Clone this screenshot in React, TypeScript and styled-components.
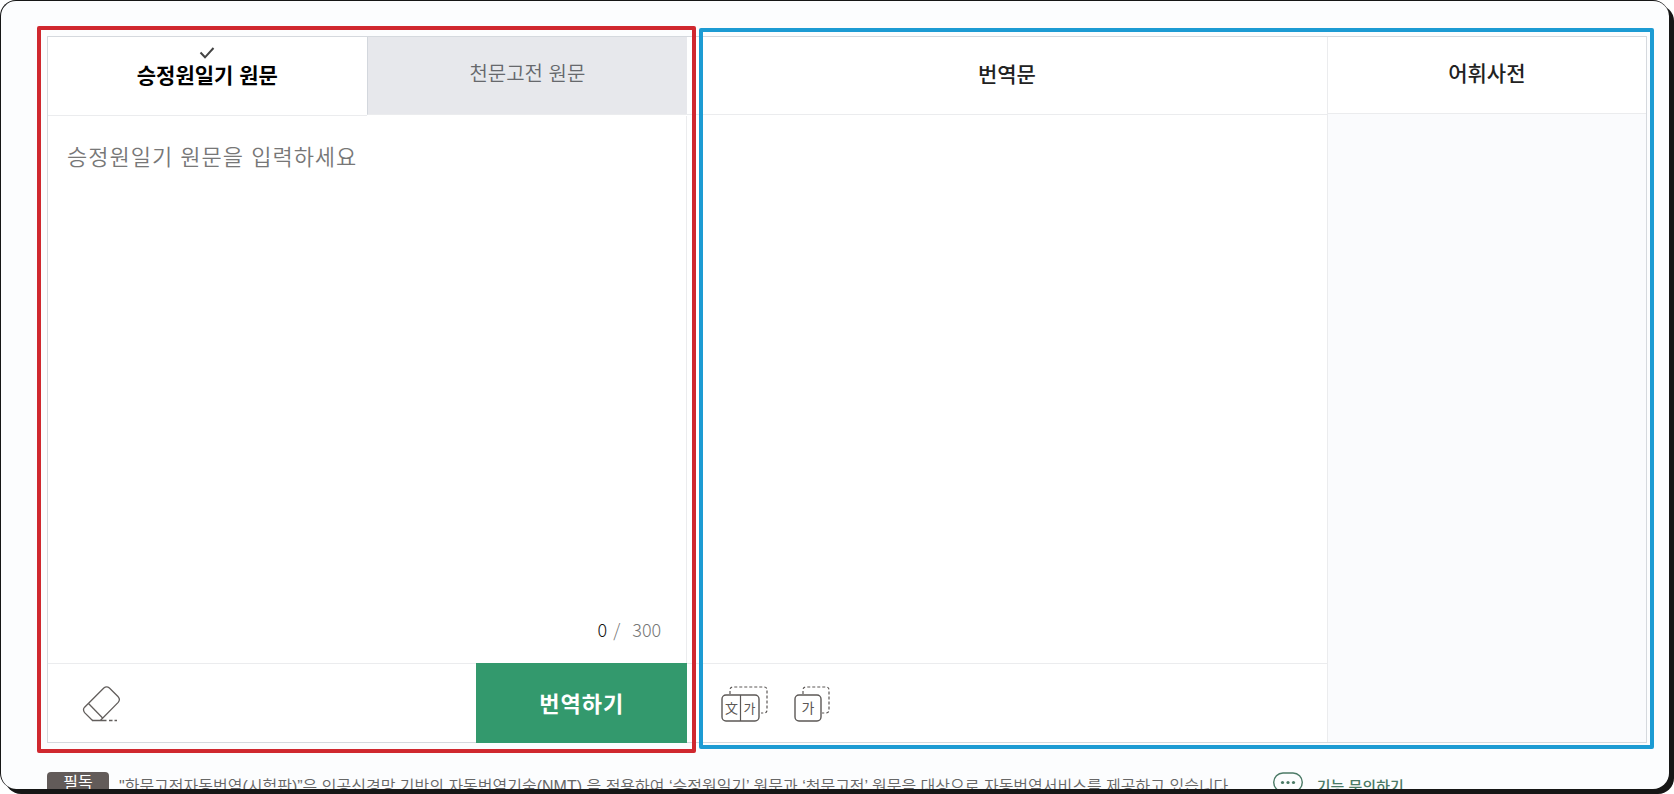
import React, { useState } from "react";
import styled, { createGlobalStyle } from "styled-components";

const GlobalStyle = createGlobalStyle`
  *, *::before, *::after { box-sizing: border-box; }
  body {
    margin: 0;
    background: #fff;
    font-family: "Liberation Sans", "Noto Sans CJK KR", sans-serif;
  }
  button, textarea { font-family: inherit; margin: 0; }
`;

const Page = styled.div`
  height: 100vh;
  padding: 0 5px 5px 0;
  overflow: hidden;
`;

const Frame = styled.div`
  height: 100%;
  padding: 35px 22px 0 46px;
  overflow: hidden;
  background: #fcfdfe;
  border: 1px solid #161616;
  border-right-width: 0;
  border-bottom-width: 0;
  border-radius: 16px;
  box-shadow: 5px 5px 0 #161616;
`;

const Translator = styled.main`
  display: grid;
  grid-template-columns: 2fr 3fr;
  height: 707px;
  border: 1px solid #d5d9de;
  background: #fff;
`;

const Source = styled.section`
  position: relative;
  z-index: 1;
  display: flex;
  flex-direction: column;
  min-width: 0;
`;

const Results = styled.div`
  position: relative;
  display: grid;
  grid-template-columns: 1fr 33.3%;
  min-width: 0;
`;

const Outline = styled.div<{ $color: string; $inset: string }>`
  position: absolute;
  inset: ${(p) => p.$inset};
  border: 4px solid ${(p) => p.$color};
  border-radius: 2px;
  pointer-events: none;
`;

const Tabs = styled.div`
  display: grid;
  grid-template-columns: calc(50% - 1px) 1fr;
  height: 79px;
`;

const Tab = styled.button<{ $active: boolean }>`
  display: flex;
  flex-direction: column;
  align-items: center;
  padding: ${(p) => (p.$active ? "10px" : "21px")} 0 0;
  height: ${(p) => (p.$active ? "79px" : "78px")};
  border: 0;
  border-bottom: 1px solid #ebecee;
  border-left: ${(p) => (p.$active ? "0" : "1px solid #d3d7dd")};
  background: ${(p) => (p.$active ? "#fff" : "#e7e8ec")};
  color: ${(p) => (p.$active ? "#000" : "#66686c")};
  font-size: ${(p) => (p.$active ? "21px" : "20px")};
  font-weight: ${(p) => (p.$active ? 600 : 350)};
  line-height: ${(p) => (p.$active ? "34px" : "32px")};
  cursor: pointer;
`;

const InputArea = styled.div`
  display: flex;
  flex-direction: column;
  flex: 1;
  padding: 24px 25px 18px 19px;
  border-right: 1px solid #ebecee;
`;

const SourceText = styled.textarea`
  flex: 1;
  width: 100%;
  padding: 0;
  border: 0;
  outline: 0;
  resize: none;
  background: transparent;
  color: #222;
  font-size: 22px;
  font-weight: 350;
  line-height: 36px;
  letter-spacing: 1px;
  &::placeholder { color: #777; opacity: 1; }
`;

const Counter = styled.p`
  display: flex;
  justify-content: flex-end;
  gap: 6px;
  margin: 0;
  color: #777;
  font-family: "Noto Sans CJK KR", sans-serif;
  font-size: 18px;
  font-weight: 300;
  line-height: 32px;
`;

const Count = styled.span`
  color: #111;
`;

const Limit = styled.span`
  padding-left: 6px;
`;

const Toolbar = styled.div`
  display: flex;
  align-items: center;
  height: 79px;
  border-top: 1px solid #ebecee;
`;

const IconButton = styled.button`
  display: flex;
  padding: 0;
  border: 0;
  background: none;
  cursor: pointer;
`;

const SourceTools = styled(Toolbar)`
  justify-content: space-between;
`;

const EraseButton = styled(IconButton)`
  margin-left: 34px;
`;

const CopyTools = styled(Toolbar)`
  gap: 26px;
  padding: 1px 0 0 34px;
`;

const TranslateButton = styled.button`
  align-self: stretch;
  width: 33%;
  margin: -1px 0;
  padding: 0 0 2px;
  border: 0;
  background: #33996d;
  color: #fff;
  font-size: 22px;
  font-weight: 700;
  letter-spacing: 1px;
  cursor: pointer;
`;

const Column = styled.section<{ $tinted?: boolean }>`
  display: flex;
  flex-direction: column;
  min-width: 0;
  background: ${(p) => (p.$tinted ? "#fafbfd" : "#fff")};
  border-left: ${(p) => (p.$tinted ? "1px solid #ebecee" : "0")};
`;

const ColumnTitle = styled.h2<{ $height: number }>`
  display: flex;
  align-items: center;
  justify-content: center;
  height: ${(p) => p.$height}px;
  margin: 0;
  padding-bottom: 2px;
  border-bottom: 1px solid #ebecee;
  background: #fff;
  color: #222;
  font-size: 21px;
  font-weight: 500;
  line-height: 32px;
`;

const Output = styled.div`
  flex: 1;
`;

const Footer = styled.footer`
  display: flex;
  align-items: flex-start;
  padding-top: 29px;
  white-space: nowrap;
`;

const Badge = styled.strong`
  flex: none;
  width: 62px;
  height: 26px;
  border-radius: 4px;
  background: #625b59;
  color: #fff;
  font-size: 16px;
  font-weight: 400;
  line-height: 22px;
  text-align: center;
`;

const Notice = styled.p`
  margin: 0 40px 0 10px;
  color: #666;
  font-size: 16px;
  font-weight: 350;
  line-height: 30px;
`;

const AskLink = styled.a`
  display: flex;
  gap: 14px;
  color: #4b7a66;
  font-size: 15px;
  font-weight: 500;
  line-height: 30px;
  text-decoration: none;
`;

const CheckIcon = () => (
  <svg width="16" height="12" viewBox="0 0 16 12" fill="none" stroke="#444" strokeWidth="2" aria-hidden="true">
    <path d="M1.5 5.5 6 10.3 14.5 1" />
  </svg>
);

const EraserIcon = () => (
  <svg width="40" height="38" viewBox="0 0 40 38" fill="none" stroke="#625e5c" strokeWidth="1.3" aria-hidden="true">
    <path d="M10.5 36.5 2.6 28.6Q.4 25.8 2.6 23.2L21.8 4Q24.6 1.6 27.4 4L36.2 12.8Q38.6 15.6 36.2 18.4L18.6 36.3" />
    <path d="M6.5 19.5 20.6 34" />
    <path d="M10 36.5H24.5M27 36.5H30.5M32.5 36.5H35" />
  </svg>
);

const CopyBothIcon = () => (
  <svg width="47" height="36" viewBox="0 0 47 36" fill="none" stroke="#5c5856" aria-hidden="true">
    <path d="M9 8V4Q9 1 12 1H43Q46 1 46 4V24Q46 27 43 27H40" strokeDasharray="3 2" strokeWidth="1.2" />
    <rect x="1" y="9" width="37" height="26" rx="4" strokeWidth="1.4" />
    <path d="M19.5 9V35" strokeWidth="1.2" />
    <text x="10.5" y="27" fontSize="13" textAnchor="middle" fill="#5c5856" stroke="none">文</text>
    <text x="28.5" y="27" fontSize="13" textAnchor="middle" fill="#5c5856" stroke="none">가</text>
  </svg>
);

const CopyIcon = () => (
  <svg width="36" height="36" viewBox="0 0 36 36" fill="none" stroke="#5c5856" aria-hidden="true">
    <path d="M9 8V4Q9 1 12 1H32Q35 1 35 4V24Q35 27 32 27H28" strokeDasharray="3 2" strokeWidth="1.2" />
    <rect x="1" y="9" width="26" height="26" rx="4" strokeWidth="1.4" />
    <text x="14" y="27" fontSize="14" textAnchor="middle" fill="#5c5856" stroke="none">가</text>
  </svg>
);

const ChatIcon = () => (
  <svg width="30" height="26" viewBox="0 0 30 26" fill="none" stroke="#4b7a66" aria-hidden="true">
    <path d="M10 1H20A9.3 9.3 0 0 1 20 19.6H17L12 24V19.6H10A9.3 9.3 0 0 1 10 1Z" strokeWidth="1.4" />
    <g fill="#4b7a66" stroke="none">
      <circle cx="9.5" cy="10.5" r="1.6" />
      <circle cx="15" cy="10.5" r="1.6" />
      <circle cx="20.5" cy="10.5" r="1.6" />
    </g>
  </svg>
);

const SOURCES = ["승정원일기 원문", "천문고전 원문"];
const LIMIT = 300;

export default function App() {
  const [active, setActive] = useState(0);
  const [text, setText] = useState("");

  return (
    <Page>
      <GlobalStyle />
      <Frame>
        <Translator>
          <Source>
            <Tabs role="tablist">
              {SOURCES.map((label, i) => (
                <Tab
                  key={label}
                  type="button"
                  role="tab"
                  aria-selected={i === active}
                  $active={i === active}
                  onClick={() => setActive(i)}
                >
                  {i === active && <CheckIcon />}
                  {label}
                </Tab>
              ))}
            </Tabs>
            <InputArea>
              <SourceText
                aria-label={SOURCES[active]}
                placeholder={`${SOURCES[active]}을 입력하세요`}
                maxLength={LIMIT}
                value={text}
                onChange={(e) => setText(e.target.value)}
              />
              <Counter>
                <Count>{text.length}</Count>
                <span>/</span>
                <Limit>{LIMIT}</Limit>
              </Counter>
            </InputArea>
            <SourceTools>
              <EraseButton type="button" aria-label="지우기" onClick={() => setText("")}>
                <EraserIcon />
              </EraseButton>
              <TranslateButton type="button">번역하기</TranslateButton>
            </SourceTools>
            <Outline $color="#d0282f" $inset="-11px -9px -11px -11px" />
          </Source>
          <Results>
            <Column>
              <ColumnTitle $height={78}>번역문</ColumnTitle>
              <Output />
              <CopyTools>
                <IconButton type="button" aria-label="원문과 번역문 복사">
                  <CopyBothIcon />
                </IconButton>
                <IconButton type="button" aria-label="번역문 복사">
                  <CopyIcon />
                </IconButton>
              </CopyTools>
            </Column>
            <Column $tinted>
              <ColumnTitle $height={77}>어휘사전</ColumnTitle>
              <Output />
            </Column>
            <Outline $color="#1c9bd3" $inset="-9px -8px -7px 12px" />
          </Results>
        </Translator>
        <Footer>
          <Badge>필독</Badge>
          <Notice>
            "한문고전자동번역(시험판)”은 인공신경망 기반의 자동번역기술(NMT) 을 적용하여 ‘승정원일기’ 원문과 ‘천문고전’ 원문을 대상으로 자동번역서비스를 제공하고 있습니다.
          </Notice>
          <AskLink href="#inquiry">
            <ChatIcon />
            기능 문의하기
          </AskLink>
        </Footer>
      </Frame>
    </Page>
  );
}
